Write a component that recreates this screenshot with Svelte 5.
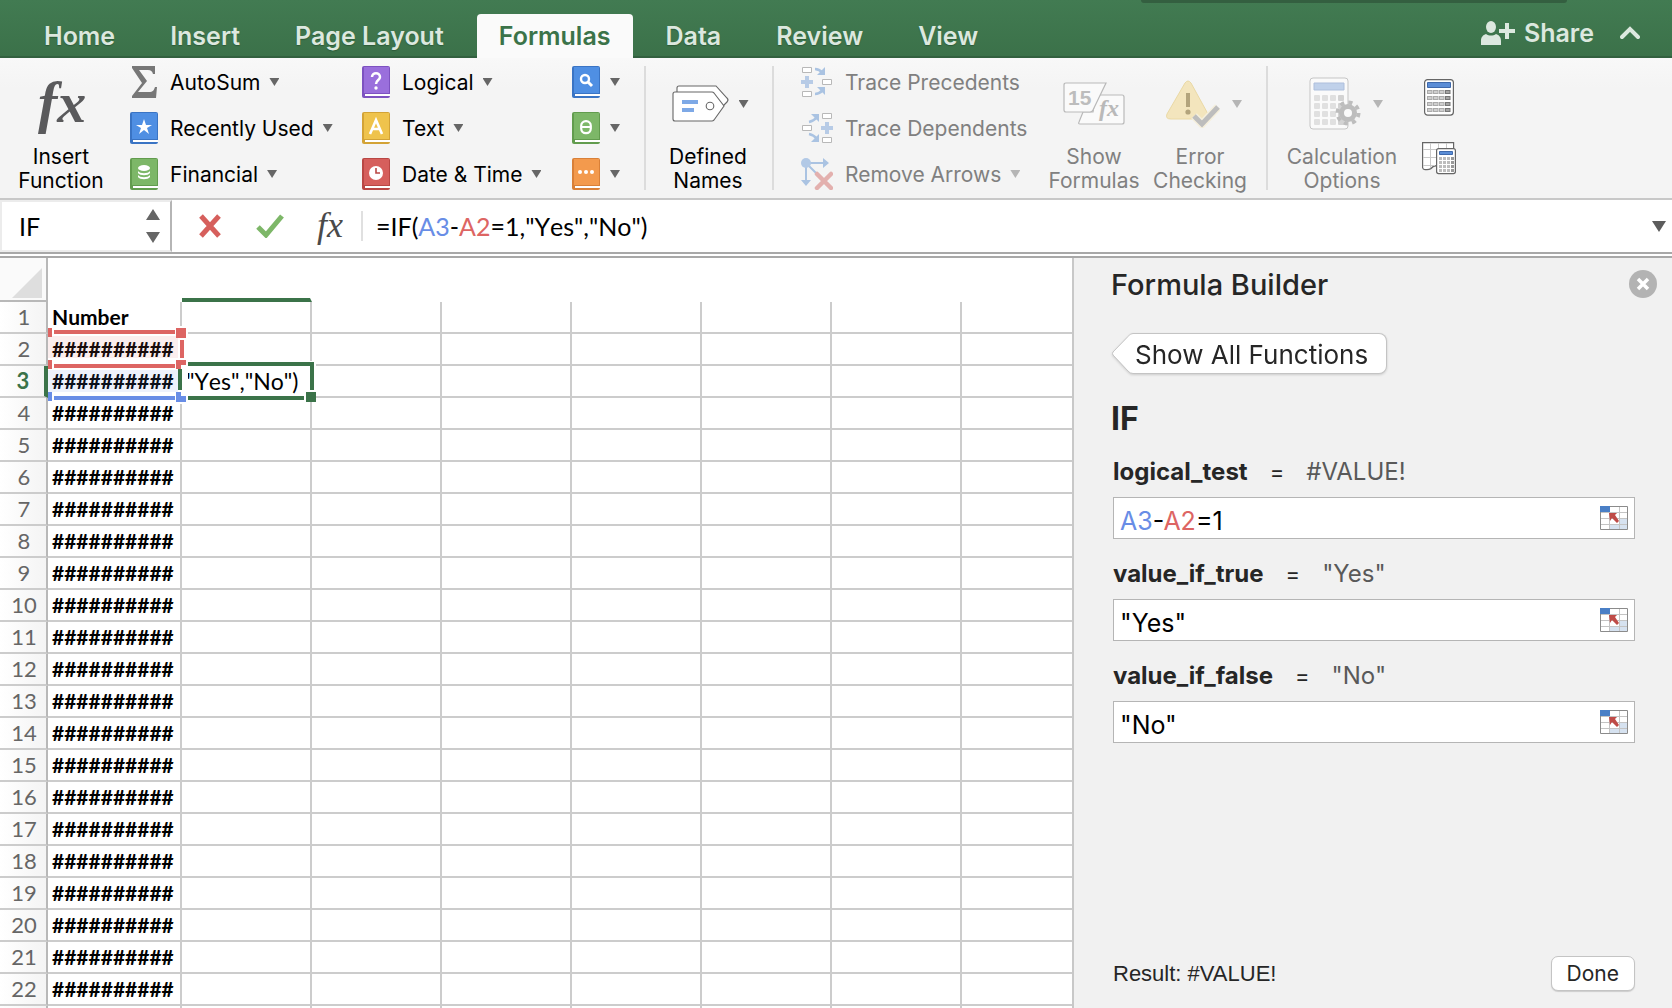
<script>
	const tabs = ['Home', 'Insert', 'Page Layout', 'Formulas', 'Data', 'Review', 'View'];
	let activeTab = 'Formulas';

	// Function library, one array per column of the ribbon
	const library = [
		[
			{ label: 'AutoSum', icon: 'sigma' },
			{ label: 'Recently Used', icon: 'star', color: '#4f8fe3', edge: '#3a74c4' },
			{ label: 'Financial', icon: 'coins', color: '#7db768', edge: '#629c4e' }
		],
		[
			{ label: 'Logical', icon: 'question', color: '#9a6fdc', edge: '#7d52c0' },
			{ label: 'Text', icon: 'letter', color: '#efc34c', edge: '#d3a336' },
			{ label: 'Date & Time', icon: 'clock', color: '#d65f5c', edge: '#b94744' }
		],
		[
			{ title: 'Lookup & Reference', icon: 'search', color: '#4f8fe3', edge: '#3a74c4' },
			{ title: 'Math & Trig', icon: 'theta', color: '#7db768', edge: '#629c4e' },
			{ title: 'More Functions', icon: 'dots', color: '#f39a4d', edge: '#d98038' }
		]
	];

	const rows = Array.from({ length: 22 }, (_, i) => i + 1);
	const columns = ['B', 'C', 'D', 'E', 'F', 'G', 'H'];
	const buttonRows = [0, 1, 2, 3];

	let nameBox = 'IF';
	let formula = '=IF(A3-A2=1,"Yes","No")';
	let args = [
		{ name: 'logical_test', result: '#VALUE!', value: 'A3-A2=1' },
		{ name: 'value_if_true', result: '"Yes"', value: '"Yes"' },
		{ name: 'value_if_false', result: '"No"', value: '"No"' }
	];

	// Split a formula so that every cell reference can get its own colour
	function tokens(text) {
		return text.split(/(A2|A3)/).filter(Boolean);
	}
</script>

<div class="window">
	<header class="tabbar">
		<nav>
			{#each tabs as tab}
				<button class="tab" class:active={tab === activeTab} on:click={() => (activeTab = tab)}>{tab}</button>
			{/each}
		</nav>
		<button class="share">
			<svg width="34" height="26" viewBox="0 0 34 26" fill="currentColor">
				<ellipse cx="10" cy="7" rx="5" ry="6" />
				<path d="M0 25v-4c0-4 2-6 5-7 3 2 7 2 10 0 3 1 5 3 5 7v4z" />
				<path d="M24 3h4v6h6v4h-6v6h-4v-6h-6V9h6z" />
			</svg>
			Share
		</button>
		<button class="collapse" aria-label="Collapse ribbon">
			<svg width="20" height="14" viewBox="0 0 20 14" fill="none" stroke="currentColor" stroke-width="4" stroke-linecap="round">
				<path d="M2 11l8-8 8 8" />
			</svg>
		</button>
	</header>

	<section class="ribbon">
		<button class="big insert">
			<span class="art">
				<svg width="66" height="74" viewBox="0 0 66 74"><text x="10" y="55" class="fx" font-size="58" font-weight="bold" fill="#5a5a5c">fx</text></svg>
			</span>
			Insert<br />Function
		</button>

		{#each library as column, c}
			<div class="stack library{c}">
				{#each column as item}
					<button class="item" aria-label={item.title}>
						{#if item.icon === 'sigma'}
							<svg width="28" height="32" viewBox="0 0 28 32" fill="#777">
								<path d="M2 0h23v8h-2c-1-3-2-4-5-4H9l8 11L8 26h11c4 0 5-2 6-5h2l-1 11H2v-2l10-13L2 2z" />
							</svg>
						{:else}
							<svg width="28" height="32" viewBox="0 0 28 32">
								<rect width="28" height="32" rx="2" fill={item.edge} />
								<path d="M2 1h25v26H2z" fill={item.color} />
								<path d="M3 28h25v2H3z" fill="#fff" />
								{#if item.icon === 'star'}
									<path d="M14 7l2 6h6l-5 3 2 6-5-4-5 4 2-6-5-3h6z" fill="#fff" />
								{:else if item.icon === 'coins'}
									<ellipse cx="14" cy="10" rx="6" ry="3" fill="#fff" />
									<path d="M8 13c2 3 10 3 12 0v2c-2 3-10 3-12 0zM8 17c2 3 10 3 12 0v2c-2 3-10 3-12 0z" fill="#fff" />
								{:else if item.icon === 'question'}
									<path d="M10 11c0-5 8-5 8 0 0 3-4 3-4 7" fill="none" stroke="#fff" stroke-width="2.5" />
									<circle cx="14" cy="22" r="1.7" fill="#fff" />
								{:else if item.icon === 'letter'}
									<path d="M8 22l6-14 6 14M10 17h8" fill="none" stroke="#fff" stroke-width="2.6" />
								{:else if item.icon === 'clock'}
									<circle cx="14" cy="15" r="7" fill="#fff" />
									<path d="M14 10v5h4" fill="none" stroke={item.edge} stroke-width="1.6" />
								{:else if item.icon === 'search'}
									<circle cx="13" cy="13" r="4" fill="none" stroke="#fff" stroke-width="2.4" />
									<path d="M16 16l4 4" stroke="#fff" stroke-width="3" />
								{:else if item.icon === 'theta'}
									<rect x="9.2" y="9.2" width="9.6" height="12" rx="4.6" fill="none" stroke="#fff" stroke-width="2.2" />
									<path d="M9 15h10" stroke="#fff" stroke-width="2" />
								{:else}
									<circle cx="8" cy="14" r="2" fill="#fff" />
									<circle cx="14" cy="14" r="2" fill="#fff" />
									<circle cx="20" cy="14" r="2" fill="#fff" />
								{/if}
							</svg>
						{/if}
						{#if item.label}<span>{item.label}</span>{/if}
						<i class="caret"></i>
					</button>
				{/each}
			</div>
		{/each}

		<div class="divider"></div>

		<button class="big names">
			<span class="art">
				<svg width="58" height="38" viewBox="0 0 58 38" fill="#fff" stroke="#666" stroke-width="1.1">
					<path d="M5 7V3q0-2 2-2h37l11 12q2 2 0 4l-8 8" />
					<path d="M3 7h37q1 0 2 1l10 13-10 14q-1 1-2 1H3q-2 0-2-2V9q0-2 2-2z" />
					<circle cx="38" cy="21" r="3.8" />
					<path d="M10 15h16v4H10zM10 23h12v4H10z" fill="#7ea9e6" stroke="none" />
				</svg>
				<i class="caret"></i>
			</span>
			Defined<br />Names
		</button>

		<div class="divider"></div>

		<div class="stack trace">
			<button class="item" disabled>
				<svg width="32" height="32" viewBox="0 0 32 32" fill="none">
					<path d="M1.5 1.5h9v5h-9zM21.5 13.5h9v5h-9zM1.5 25.5h9v5h-9z" fill="#fff" stroke="#b8b8b8" />
					<path d="M4 10h4v4h4v4H8v4H4v-4H0v-4h4z" fill="#b7cbe6" />
					<path d="M14 3q4 0 8 4M14 28q4 0 8-4" stroke="#aac3e2" stroke-width="2.5" />
					<path d="M24 1v8h-8zM24 29v-8h-8z" fill="#aac3e2" />
				</svg>
				<span>Trace Precedents</span>
			</button>
			<button class="item" disabled>
				<svg width="32" height="32" viewBox="0 0 32 32" fill="none">
					<path d="M21.5 1.5h9v5h-9zM1.5 13.5h9v5h-9zM21.5 25.5h9v5h-9z" fill="#fff" stroke="#b8b8b8" />
					<path d="M24 10h4v4h4v4h-4v4h-4v-4h-4v-4h4z" fill="#b7cbe6" />
					<path d="M8 10q5-1 8-5M8 22q5 1 8 5" stroke="#aac3e2" stroke-width="2.5" />
					<path d="M10 2h8v8zM10 30h8v-8z" fill="#aac3e2" />
				</svg>
				<span>Trace Dependents</span>
			</button>
			<button class="item" disabled>
				<svg width="32" height="32" viewBox="0 0 32 32" fill="none">
					<path d="M5 5h19M5 5v18M5 5l10 10" stroke="#aac3e2" stroke-width="2" />
					<circle cx="5" cy="5" r="5" fill="#b2c9e6" />
					<path d="M22 0l6 5-6 5zM0 22h10l-5 6z" fill="#aac3e2" />
					<path d="M16 16l14 14M30 16L16 30" stroke="#e3b0ae" stroke-width="4.5" stroke-linecap="round" />
				</svg>
				<span>Remove Arrows</span>
				<i class="caret"></i>
			</button>
		</div>

		<button class="big show" disabled>
			<span class="art">
				<svg width="62" height="44" viewBox="0 0 62 44" fill="#fafafa" stroke="#b9b9b9" stroke-width="1.2">
					<path d="M33 13h26q2 0 2 2v25q0 2-2 2H17q-2 0-1-2l4-10h10z" />
					<path d="M3 1h40L30 28q-1 2-3 2H3q-2 0-2-2V3q0-2 2-2z" />
					<text x="5" y="23" font-family="Liberation Sans, sans-serif" font-size="21" font-weight="bold" fill="#bdbdbd" stroke="none">15</text>
					<text x="36" y="34" class="fx" font-size="24" font-weight="bold" fill="#b9b9b9" stroke="none">fx</text>
				</svg>
			</span>
			Show<br />Formulas
		</button>

		<button class="big error" disabled>
			<span class="art">
				<svg width="54" height="48" viewBox="0 0 54 48">
					<path d="M19 3q3-4 6 0l17 31q2 5-3 5H5q-6 0-4-5z" fill="#f3e5bd" stroke="#ead9a5" />
					<path d="M20 13h4v14h-4z" fill="#b3a47c" />
					<circle cx="22" cy="32" r="2.6" fill="#b3a47c" />
					<path d="M28 36l8 8 16-17" fill="none" stroke="#f5efdc" stroke-width="8" />
					<path d="M28 36l8 8 16-17" fill="none" stroke="#bdbdbd" stroke-width="5" />
				</svg>
				<i class="caret"></i>
			</span>
			Error<br />Checking
		</button>

		<div class="divider last"></div>

		<button class="big calculation" disabled>
			<span class="art">
				<svg width="52" height="54" viewBox="0 0 52 54">
					<rect x="1" y="1" width="38" height="51" rx="3" fill="#fafafa" stroke="#c5c5c5" />
					<path d="M5 6h30v7H5z" fill="#c0d1ea" stroke="#aebfdc" />
					{#each buttonRows as r}
						{#each buttonRows as c}
							<rect x={5 + c * 8} y={18 + r * 8} width="6" height="6" rx="1" fill={c === 3 ? '#d3d3d3' : '#e0e0e0'} />
						{/each}
					{/each}
					<circle cx="39" cy="36" r="6.5" fill="#fafafa" stroke="#bdbdbd" stroke-width="5" />
					<circle cx="39" cy="36" r="10.5" fill="none" stroke="#bdbdbd" stroke-width="4" stroke-dasharray="4.1 4.15" />
				</svg>
				<i class="caret"></i>
			</span>
			Calculation<br />Options
		</button>

		<div class="calculate">
			<button aria-label="Calculate Now">
				<svg width="30" height="37" viewBox="0 0 30 37">
					<rect x=".6" y=".6" width="28.8" height="35.5" rx="3" fill="#fff" stroke="#666" stroke-width="1.2" />
					<path d="M3.5 3.5h23v5h-23z" fill="#5b8dd6" stroke="#3f69ab" />
					{#each buttonRows as r}
						{#each buttonRows as c}
							<rect x={3.5 + c * 6} y={11.5 + r * 6} width="4.5" height="3" fill={c === 3 ? '#a5a5a5' : '#cfcfcf'} stroke={c === 3 ? '#777' : '#aaa'} />
						{/each}
					{/each}
				</svg>
			</button>
			<button aria-label="Calculate Sheet">
				<svg width="34" height="33" viewBox="0 0 34 33">
					<path d="M.6.6h31v23H15q-4 0-6 3-2 1-4 1H3q-2 0-2.4-2z" fill="#fff" stroke="#666" stroke-width="1.2" />
					<path d="M8.5 1v25M16.5 1v22M24.5 1v8M1 7.5h30M1 15.5h14M1 23.5h12" stroke="#c9c9c9" />
					<rect x="14.6" y="6.6" width="18.8" height="25" rx="2" fill="#fff" stroke="#666" stroke-width="1.2" />
					<path d="M17.5 9.5h13v3h-13z" fill="#5b8dd6" stroke="#3f69ab" />
					{#each buttonRows as r}
						{#each buttonRows as c}
							<rect x={17 + c * 4} y={15 + r * 4} width="3" height="3" fill={c === 3 ? '#999' : '#bdbdbd'} />
						{/each}
					{/each}
				</svg>
			</button>
		</div>
	</section>

	<section class="formulabar">
		<div class="namebox">
			<input aria-label="Name box" bind:value={nameBox} />
			<button aria-label="Previous or next name">
				<svg width="14" height="36" viewBox="0 0 14 36" fill="#666"><path d="M7 1l7 11H0zM0 24h14L7 35z" /></svg>
			</button>
		</div>
		<button class="cancel" aria-label="Cancel">
			<svg width="24" height="24" viewBox="0 0 24 24" fill="none" stroke="#d65f5c" stroke-width="5"><path d="M3 2l18 20M21 2L3 22" /></svg>
		</button>
		<button class="enter" aria-label="Enter">
			<svg width="28" height="24" viewBox="0 0 28 24" fill="none" stroke="#7db768" stroke-width="5"><path d="M2 13l8 8L26 2" /></svg>
		</button>
		<button class="insertfx" aria-label="Insert function">
			<svg width="38" height="44" viewBox="0 0 38 44"><text x="6" y="33" class="fx" font-size="36" fill="#4a4a4a">fx</text></svg>
		</button>
		<div class="formula">
			<div class="paint" aria-hidden="true">{#each tokens(formula) as t}<span class={t}>{t}</span>{/each}</div>
			<input aria-label="Formula" spellcheck="false" bind:value={formula} />
		</div>
		<button class="expand" aria-label="Expand formula bar">
			<svg width="14" height="11" viewBox="0 0 14 11" fill="#5c5c5c"><path d="M0 0h14L7 11z" /></svg>
		</button>
	</section>

	<main>
		<div class="sheet">
			<table>
				<thead>
					<tr>
						<th class="corner"><svg width="30" height="30" viewBox="0 0 30 30"><path d="M30 0v30H0z" fill="#dedede" /></svg></th>
						<th class="first"></th>
						{#each columns as column}
							<th class:picked={column === 'B'}></th>
						{/each}
					</tr>
				</thead>
				<tbody>
					{#each rows as row}
						<tr class:current={row === 3}>
							<th scope="row">{row}</th>
							<td class="first">{row === 1 ? 'Number' : '##########'}</td>
							{#each columns as column}
								<td>{row === 3 && column === 'B' ? '"Yes","No")' : ''}</td>
							{/each}
						</tr>
					{/each}
					<tr class="rest">
						<th></th>
						<td></td>
						{#each columns as column}<td></td>{/each}
					</tr>
				</tbody>
			</table>
			<!-- Range outlines of A2, A3 and the cell being edited -->
			<svg class="ranges" width="272" height="80" viewBox="0 0 272 80">
				<path d="M4 6h135v34H4z" fill="#dd6563" opacity=".11" />
				<path d="M4 40h135v30H4z" fill="#688de6" opacity=".11" />
				<path d="M4 0h138v10H4zM134 0h10v77h-10zM4 32h138v12H4zM4 66h138v12H4zM134 66h12v12h-12z" fill="#fff" />
				<path d="M10 4h121v4H10zM4 2h4v9H4zM132 2h10v10h-10zM136 14h4v18h-4zM10 38h121v4H10zM4 34h4v9H4zM132 34h10v5h-5v4h-5z" fill="#dd6563" />
				<path d="M10 70h121v4H10zM4 66h4v9H4zM132 66h5v4h5v6h-10z" fill="#688de6" />
				<path d="M142 35h130v6H142zM142 68h118v8H142zM260 64h12v12h-12z" fill="#fff" />
				<path d="M134 43h4v21h-4zM144 36h126v28h-4V40H144zM144 70h116v4H144zM262 66h10v10h-10z" fill="#3b7349" />
			</svg>
		</div>

		<aside>
			<div class="title">
				<h2>Formula Builder</h2>
				<button aria-label="Close">
					<svg width="28" height="28" viewBox="0 0 28 28"><circle cx="14" cy="14" r="14" fill="#b3b3b3" /><path d="M9 9l10 10M19 9L9 19" stroke="#fff" stroke-width="3.5" /></svg>
				</button>
			</div>
			<button class="back">
				<svg width="24" height="42" viewBox="0 0 24 42"><path d="M24 .5h-2q-3 0-5 3L2 19q-1 1.5 0 3l15 16q2 2.5 5 2.5h2" fill="#fff" stroke="#c4c4c4" /></svg>
				<span>Show All Functions</span>
			</button>
			<h1>IF</h1>
			{#each args as arg}
				<div class="arg">
					<div class="caption">
						<label for={arg.name}>{arg.name}</label>
						<span>=</span>
						<output>{arg.result}</output>
					</div>
					<div class="field">
						<div class="paint" aria-hidden="true">{#each tokens(arg.value) as t}<span class={t}>{t}</span>{/each}</div>
						<input id={arg.name} spellcheck="false" bind:value={arg.value} />
						<button aria-label="Select range">
							<svg width="28" height="25" viewBox="0 0 28 25">
								<path d="M.5.5h27v23H.5z" fill="#fff" stroke="#8b8b8b" />
								<path d="M9 18h18v5H9zM19 12h8v7h-8z" fill="#d6e2f0" />
								<path d="M9.5 1v22M19.5 1v22M1 6.5h26M1 12.5h26M1 18.5h26" stroke="#c4c4c4" />
								<path d="M0 0h10v6H0z" fill="#4a7fc6" />
								<path d="M9 7h8l-2 2 4 6-2 2-5-5-2 3z" fill="#bf4b47" />
							</svg>
						</button>
					</div>
				</div>
			{/each}
			<footer>
				<p>Result: #VALUE!</p>
				<button>Done</button>
			</footer>
		</aside>
	</main>
</div>

<style>
	:global(body) {
		margin: 0;
	}
	.window {
		display: flex;
		flex-direction: column;
		height: 100vh;
		overflow: hidden;
		background: #fff;
		color: #000;
		font-family: Inter, 'Liberation Sans', sans-serif;
		font-size: 21px;
	}
	button {
		padding: 0;
		border: 0;
		background: none;
		color: inherit;
		font: inherit;
	}
	svg {
		display: block;
		flex: none;
	}
	input {
		box-sizing: border-box;
		min-width: 0;
		padding: 0;
		border: 0;
		outline: 0;
		background: none;
		font: inherit;
	}
	.fx {
		font-family: 'Liberation Serif', serif;
		font-style: italic;
	}

	.tabbar {
		position: relative;
		display: flex;
		box-sizing: border-box;
		height: 58px;
		padding: 14px 32px 0 22px;
		background: linear-gradient(#427b52, #3b7149);
		box-shadow: inset 0 -2px #32603f;
		color: #dce8df;
		font-size: 25px;
		font-weight: 600;
	}
	.tabbar::before {
		content: '';
		position: absolute;
		top: 0;
		right: 105px;
		width: 426px;
		height: 3px;
		border-radius: 0 0 4px 4px;
		background: #345f40;
	}
	nav {
		display: flex;
		flex: 1;
		gap: 11px;
	}
	.tab {
		height: 44px;
		padding: 0 22px;
		border-radius: 4px 4px 0 0;
		line-height: 40px;
		text-shadow: 0 1px 1px #2c5a38;
	}
	.tab.active {
		background: #fafafa;
		color: #3b7349;
		text-shadow: none;
	}
	.share {
		display: flex;
		align-items: center;
		gap: 9px;
		height: 38px;
	}
	.collapse {
		height: 38px;
		margin-left: 26px;
	}

	.ribbon {
		display: flex;
		align-items: flex-start;
		box-sizing: border-box;
		height: 142px;
		padding: 8px 0 0 16px;
		border-bottom: 2px solid #c8c8c8;
		background: linear-gradient(#f8f8f8, #f4f4f4 30px);
	}
	.caret {
		flex: none;
		width: 10px;
		height: 8px;
		background: #666;
		clip-path: polygon(0 0, 100% 0, 50% 100%);
	}
	.ribbon button:disabled {
		color: #808080;
	}
	:disabled .caret {
		background: #b5b5b5;
	}
	.big {
		line-height: 24px;
		text-align: center;
		white-space: nowrap;
	}
	.big .art {
		display: flex;
		align-items: center;
		justify-content: center;
		gap: 9px;
		height: 76px;
		margin-bottom: 3px;
	}
	.insert {
		width: 90px;
	}
	.names {
		width: 124px;
		margin-right: 2px;
	}
	.names .art {
		padding-left: 4px;
	}
	.show {
		width: 98px;
	}
	.error {
		width: 114px;
	}
	.error .art,
	.calculation .art {
		gap: 12px;
		padding-left: 8px;
	}
	.calculation {
		width: 148px;
	}
	.stack {
		display: grid;
		gap: 14px;
	}
	.item {
		display: flex;
		align-items: center;
		gap: 10px;
		height: 32px;
		white-space: nowrap;
	}
	.item span {
		margin: 0 -1px 0 2px;
	}
	.library0 {
		width: 232px;
		margin-left: 24px;
	}
	.library1 {
		width: 210px;
	}
	.library2 {
		width: 72px;
	}
	.trace {
		width: 244px;
		margin-left: 27px;
	}
	.divider {
		width: 2px;
		height: 124px;
		background: #dcdcdc;
	}
	.last {
		margin-left: 9px;
	}
	.calculate {
		display: grid;
		gap: 26px;
		justify-items: center;
		margin: 13px 0 0 6px;
	}

	.formulabar {
		display: flex;
		align-items: center;
		flex: none;
		height: 52px;
		border-bottom: 6px double #a8a8a8;
		font-family: Lato, sans-serif;
		font-size: 25px;
		font-kerning: none;
	}
	.namebox {
		display: flex;
		align-items: center;
		align-self: stretch;
		box-sizing: border-box;
		width: 172px;
		padding: 0 10px 0 17px;
		border: 2px solid #ececec;
		border-right-color: #b5b5b5;
	}
	.namebox input {
		flex: 1;
	}
	.cancel {
		margin-left: 26px;
	}
	.enter {
		margin-left: 34px;
	}
	.insertfx {
		margin-left: 27px;
	}
	.formula {
		position: relative;
		flex: 1;
		margin-left: 12px;
		padding-left: 13px;
		border-left: 2px solid #e0e0e0;
		line-height: 30px;
	}
	.paint {
		white-space: pre;
	}
	.A2 {
		color: #dd6563;
	}
	.A3 {
		color: #688de6;
	}
	/* The real box lies over its coloured copy */
	.paint + input {
		position: absolute;
		inset: 0;
		width: 100%;
		padding-left: inherit;
		color: transparent;
		caret-color: #000;
	}
	.expand {
		margin: 0 6px;
	}

	main {
		display: flex;
		flex: 1;
		min-height: 0;
	}
	.sheet {
		position: relative;
		flex: 1;
		min-width: 0;
		overflow: hidden;
		font-family: Lato, sans-serif;
		font-kerning: none;
	}
	table {
		width: 100%;
		border-spacing: 0;
		table-layout: fixed;
	}
	th,
	td {
		box-sizing: border-box;
		width: 130px;
		height: 32px;
		padding: 0;
		border: 0 solid #ccc;
		border-width: 0 2px 2px 0;
		line-height: 28px;
		text-align: left;
		white-space: nowrap;
	}
	td {
		padding-left: 4px;
		font-size: 23px;
	}
	th:last-child,
	td:last-child {
		width: auto;
		border-right: 0;
	}
	.first {
		width: 134px;
		font-size: 21px;
		font-weight: bold;
	}
	thead th {
		height: 44px;
		border-color: transparent;
	}
	thead .corner {
		padding: 7px 0 0 12px;
		border-color: #b8b8b8;
		background: #fafafa;
	}
	thead .picked {
		border-bottom: 4px solid #3b7349;
	}
	tbody th,
	.corner {
		width: 48px;
		padding-left: 2px;
		border-right-color: #b8b8b8;
		background: linear-gradient(90deg, #fff, #f4f4f4);
		color: #666;
		font-size: 22px;
		font-weight: normal;
		text-align: center;
	}
	.current th {
		border-right: 4px solid #3b7349;
		color: #3b7349;
		font-weight: bold;
	}
	.rest th,
	.rest td {
		border-bottom: 0;
	}
	.ranges {
		position: absolute;
		top: 68px;
		left: 44px;
	}

	aside {
		display: flex;
		flex-direction: column;
		box-sizing: border-box;
		width: 600px;
		padding: 8px 37px 17px 37px;
		border-left: 2px solid #c8c8c8;
		background: #f1f1f1;
		color: #262626;
	}
	.title {
		display: flex;
		align-items: center;
		justify-content: space-between;
		height: 36px;
		margin-right: -22px;
	}
	h2 {
		margin: 0;
		font-size: 29px;
		font-weight: 500;
	}
	.back {
		display: flex;
		align-self: flex-start;
		height: 42px;
		margin-top: 31px;
		font-size: 26px;
		filter: drop-shadow(0 1px 1px #ccc);
	}
	.back span {
		box-sizing: border-box;
		height: 41px;
		padding-right: 18px;
		border: 1px solid #c4c4c4;
		border-left: 0;
		border-radius: 0 8px 8px 0;
		background: #fff;
		line-height: 41px;
	}
	h1 {
		margin: 21px 0 13px;
		font-size: 32px;
		font-weight: 700;
		line-height: 46px;
	}
	.arg,
	footer {
		padding-left: 2px;
	}
	.caption {
		display: flex;
		gap: 22px;
		height: 42px;
		font-size: 24px;
		line-height: 34px;
	}
	.caption label {
		font-weight: 700;
	}
	.caption span {
		font-size: 22px;
	}
	.caption output {
		color: #595959;
	}
	.field {
		position: relative;
		display: flex;
		align-items: center;
		justify-content: space-between;
		box-sizing: border-box;
		height: 42px;
		margin-bottom: 18px;
		padding: 0 6px;
		border: 1px solid #b5b5b5;
		background: #fff;
		color: #000;
		font-size: 25px;
	}
	.field .paint,
	.field input {
		padding-top: 5px;
		line-height: 32px;
	}
	.field button {
		position: relative;
	}
	footer {
		display: flex;
		align-items: center;
		justify-content: space-between;
		margin-top: auto;
	}
	footer p {
		margin: 0;
		font-family: 'Liberation Sans', sans-serif;
		font-size: 22px;
	}
	footer button {
		height: 35px;
		padding: 0 15px;
		border: 1px solid #c4c4c4;
		border-radius: 7px;
		background: #fff;
		box-shadow: 0 1px 1px #ccc;
	}
</style>
